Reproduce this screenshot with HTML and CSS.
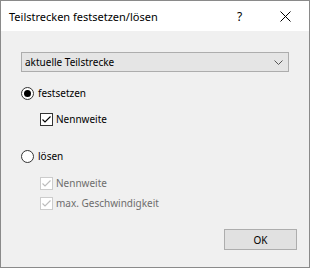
FILE: index.html
```html
<!DOCTYPE html>
<html>
<head>
<meta charset="utf-8">
<link rel="stylesheet" href="styles.css">
</head>
<body>
<div class="window">
  <div class="titlebar">
    <span class="title">Teilstrecken festsetzen/lösen</span>
    <span class="help">?</span>
    <span class="close"><svg width="11" height="11" viewBox="0 0 11 11"><path d="M0.5 0.5 L10.5 10.5 M10.5 0.5 L0.5 10.5" stroke="#000" stroke-width="1" fill="none"/></svg></span>
  </div>
  <div class="content">
    <div class="combo">
      <span>aktuelle Teilstrecke</span>
      <svg class="chev" width="9" height="5" viewBox="0 0 9 5"><path d="M0.5 0.5 L4.5 4.5 L8.5 0.5" stroke="#555" stroke-width="1" fill="none"/></svg>
    </div>
    <div class="row r1">
      <svg class="radio" width="13" height="13" viewBox="0 0 13 13"><circle cx="6.5" cy="6.5" r="6" fill="#fff" stroke="#333" stroke-width="1"/><circle cx="6.5" cy="6.5" r="3.5" fill="#000"/></svg>
      <span class="lbl">festsetzen</span>
    </div>
    <div class="row r2 indent">
      <svg class="check" width="13" height="13" viewBox="0 0 13 13"><rect x="0.5" y="0.5" width="12" height="12" fill="#fff" stroke="#333"/><path d="M2.5 6.5 L5 9 L10.5 3.5" stroke="#000" stroke-width="1.1" fill="none"/></svg>
      <span class="lbl">Nennweite</span>
    </div>
    <div class="row r3">
      <svg class="radio" width="13" height="13" viewBox="0 0 13 13"><circle cx="6.5" cy="6.5" r="6" fill="#fff" stroke="#333" stroke-width="1"/></svg>
      <span class="lbl">lösen</span>
    </div>
    <div class="row r4 indent disabled">
      <svg class="check" width="13" height="13" viewBox="0 0 13 13"><rect x="0.5" y="0.5" width="12" height="12" fill="#fff" stroke="#cccccc"/><path d="M2.5 6.5 L5 9 L10.5 3.5" stroke="#bcbcbc" stroke-width="1.1" fill="none"/></svg>
      <span class="lbl">Nennweite</span>
    </div>
    <div class="row r5 indent disabled">
      <svg class="check" width="13" height="13" viewBox="0 0 13 13"><rect x="0.5" y="0.5" width="12" height="12" fill="#fff" stroke="#cccccc"/><path d="M2.5 6.5 L5 9 L10.5 3.5" stroke="#bcbcbc" stroke-width="1.1" fill="none"/></svg>
      <span class="lbl">max. Geschwindigkeit</span>
    </div>
    <div class="buttons">
      <div class="btn">OK</div>
    </div>
  </div>
</div>
</body>
</html>
```
FILE: styles.css
```css
html, body {
  margin: 0;
  padding: 0;
  background: #f0f0f0;
}
.window {
  box-sizing: border-box;
  width: 310px;
  height: 268px;
  border: 1px solid #8a8a8a;
  background: #f0f0f0;
  font-family: "Noto Sans", "Open Sans", sans-serif;
  font-size: 10px;
  color: #000;
  display: flex;
  flex-direction: column;
}
.titlebar {
  height: 30px;
  background: #fff;
  display: flex;
  align-items: center;
  padding-left: 8px;
}
.title {
  flex: 1;
  font-size: 11px;
}
.help {
  width: 10px;
  font-size: 12px;
  margin-right: 33px;
}
.close {
  display: flex;
  margin-right: 18px;
}
.content {
  flex: 1;
  display: flex;
  flex-direction: column;
  padding: 21px 12px 0 20px;
}
.combo {
  box-sizing: border-box;
  height: 20px;
  margin-right: 8px;
  background: #e5e5e5;
  border: 1px solid #adadad;
  display: flex;
  align-items: center;
  padding-left: 3px;
  padding-right: 5px;
}
.combo span {
  flex: 1;
}
.row {
  height: 20px;
  display: flex;
  align-items: center;
}
.radio { margin-right: 4px; }
.check { margin-right: 3px; }
.indent { padding-left: 19px; }
.r1 { margin-top: 11px; }
.r2 { margin-top: 6px; }
.r3 { margin-top: 17px; }
.r4 { margin-top: 7px; }
.r5 { margin-top: 0; }
.disabled .lbl { color: #6d6d6d; }
.buttons {
  display: flex;
  justify-content: flex-end;
  margin-top: 16px;
}
.btn {
  box-sizing: border-box;
  width: 73px;
  height: 21px;
  background: #e1e1e1;
  border: 1px solid #adadad;
  display: flex;
  align-items: center;
  justify-content: center;
}
```
